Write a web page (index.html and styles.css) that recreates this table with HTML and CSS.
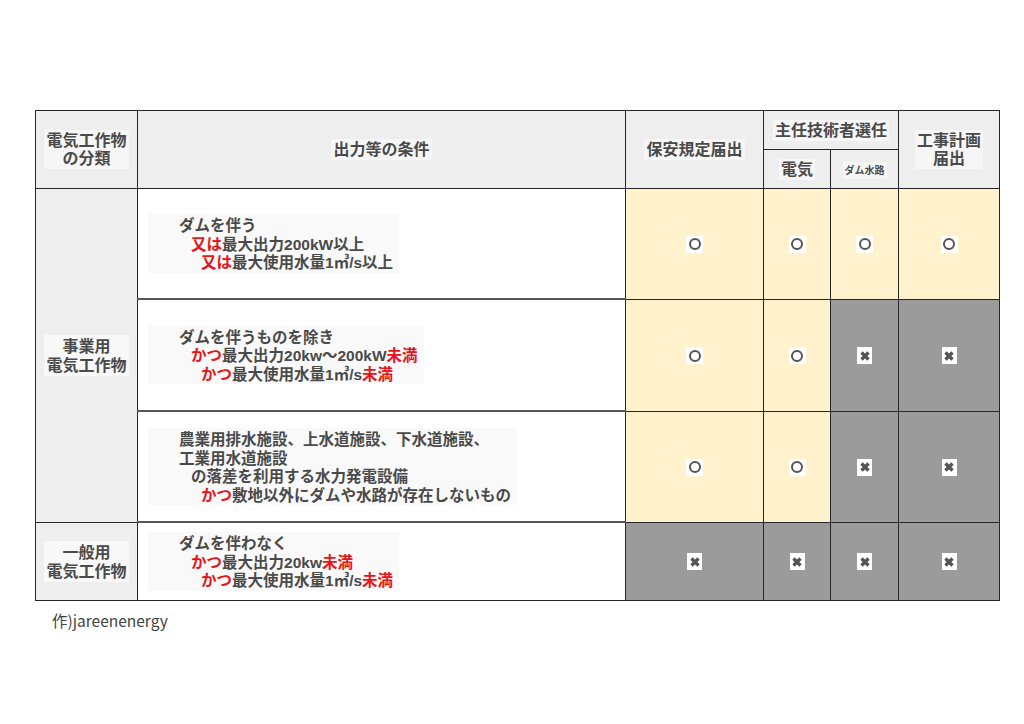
FILE: index.html
```html
<!DOCTYPE html>
<html lang="ja">
<head>
<meta charset="utf-8">
<link rel="stylesheet" href="styles.css">
</head>
<body>
<div class="page">
  <table class="grid">
    <colgroup>
      <col class="c-kind"><col class="c-cond"><col class="c-hoan"><col class="c-elec"><col class="c-dam"><col class="c-plan">
    </colgroup>
    <thead>
      <tr class="hr1">
        <th rowspan="2"><span class="lbl">電気工作物<br>の分類</span></th>
        <th rowspan="2"><span class="lbl">出力等の条件</span></th>
        <th rowspan="2"><span class="lbl">保安規定届出</span></th>
        <th colspan="2"><span class="lbl">主任技術者選任</span></th>
        <th rowspan="2"><span class="lbl">工事計画<br>届出</span></th>
      </tr>
      <tr class="hr2">
        <th><span class="lbl">電気</span></th>
        <th><span class="lbl small">ダム水路</span></th>
      </tr>
    </thead>
    <tbody>
      <tr class="r1">
        <th rowspan="3" class="kind"><span class="lbl">事業用<br>電気工作物</span></th>
        <td class="cond"><div class="cbox">
          <div>ダムを伴う</div>
          <div class="i1"><b class="red">又は</b>最大出力200kW以上</div>
          <div class="i2"><b class="red">又は</b>最大使用水量1㎥/s以上</div>
        </div></td>
        <td class="yes"><span class="mark"><span class="ring"></span></span></td>
        <td class="yes"><span class="mark"><span class="ring"></span></span></td>
        <td class="yes"><span class="mark"><span class="ring"></span></span></td>
        <td class="yes"><span class="mark"><span class="ring"></span></span></td>
      </tr>
      <tr class="r2">
        <td class="cond"><div class="cbox">
          <div>ダムを伴うものを除き</div>
          <div class="i1"><b class="red">かつ</b>最大出力20kw～200kW<b class="red">未満</b></div>
          <div class="i2"><b class="red">かつ</b>最大使用水量1㎥/s<b class="red">未満</b></div>
        </div></td>
        <td class="yes"><span class="mark"><span class="ring"></span></span></td>
        <td class="yes"><span class="mark"><span class="ring"></span></span></td>
        <td class="no"><span class="mark x"><svg width="10" height="10" viewBox="0 0 10 10"><path d="M1.5 1.5 L8.5 8.5 M8.5 1.5 L1.5 8.5" stroke="#555" stroke-width="3.4"/></svg></span></td>
        <td class="no"><span class="mark x"><svg width="10" height="10" viewBox="0 0 10 10"><path d="M1.5 1.5 L8.5 8.5 M8.5 1.5 L1.5 8.5" stroke="#555" stroke-width="3.4"/></svg></span></td>
      </tr>
      <tr class="r3">
        <td class="cond"><div class="cbox">
          <div>農業用排水施設、上水道施設、下水道施設、</div>
          <div>工業用水道施設</div>
          <div class="i1">の落差を利用する水力発電設備</div>
          <div class="i2"><b class="red">かつ</b>敷地以外にダムや水路が存在しないもの</div>
        </div></td>
        <td class="yes"><span class="mark"><span class="ring"></span></span></td>
        <td class="yes"><span class="mark"><span class="ring"></span></span></td>
        <td class="no"><span class="mark x"><svg width="10" height="10" viewBox="0 0 10 10"><path d="M1.5 1.5 L8.5 8.5 M8.5 1.5 L1.5 8.5" stroke="#555" stroke-width="3.4"/></svg></span></td>
        <td class="no"><span class="mark x"><svg width="10" height="10" viewBox="0 0 10 10"><path d="M1.5 1.5 L8.5 8.5 M8.5 1.5 L1.5 8.5" stroke="#555" stroke-width="3.4"/></svg></span></td>
      </tr>
      <tr class="r4">
        <th class="kind"><span class="lbl">一般用<br>電気工作物</span></th>
        <td class="cond"><div class="cbox">
          <div>ダムを伴わなく</div>
          <div class="i1"><b class="red">かつ</b>最大出力20kw<b class="red">未満</b></div>
          <div class="i2"><b class="red">かつ</b>最大使用水量1㎥/s<b class="red">未満</b></div>
        </div></td>
        <td class="no"><span class="mark x"><svg width="10" height="10" viewBox="0 0 10 10"><path d="M1.5 1.5 L8.5 8.5 M8.5 1.5 L1.5 8.5" stroke="#555" stroke-width="3.4"/></svg></span></td>
        <td class="no"><span class="mark x"><svg width="10" height="10" viewBox="0 0 10 10"><path d="M1.5 1.5 L8.5 8.5 M8.5 1.5 L1.5 8.5" stroke="#555" stroke-width="3.4"/></svg></span></td>
        <td class="no"><span class="mark x"><svg width="10" height="10" viewBox="0 0 10 10"><path d="M1.5 1.5 L8.5 8.5 M8.5 1.5 L1.5 8.5" stroke="#555" stroke-width="3.4"/></svg></span></td>
        <td class="no"><span class="mark x"><svg width="10" height="10" viewBox="0 0 10 10"><path d="M1.5 1.5 L8.5 8.5 M8.5 1.5 L1.5 8.5" stroke="#555" stroke-width="3.4"/></svg></span></td>
      </tr>
    </tbody>
  </table>
  <p class="credit">作)jareenenergy</p>
</div>
</body>
</html>
```
FILE: styles.css
```css
html, body {
  margin: 0;
  padding: 0;
  background: #ffffff;
}
body {
  font-family: "Noto Sans CJK JP", "Noto Sans", sans-serif;
  color: #4a4a4a;
}
.page {
  padding: 110px 0 0 35px;
}
.grid {
  border-collapse: collapse;
  table-layout: fixed;
  width: 964px;
  font-family: "Liberation Sans", "Noto Sans CJK JP", sans-serif;
}
.c-kind { width: 102px; }
.c-cond { width: 488px; }
.c-hoan { width: 138px; }
.c-elec { width: 67px; }
.c-dam { width: 68px; }
.c-plan { width: 101px; }

.grid th, .grid td {
  border: 1px solid #262626;
  padding: 0;
  text-align: center;
  vertical-align: middle;
}
.grid thead th {
  background: #eeeeee;
  font-size: 16px;
  font-weight: 700;
  line-height: 18px;
}
.hr1 th { height: 38px; }
.hr2 th { height: 38px; }
.lbl {
  display: inline-block;
  background: #f6f6f6;
  padding: 2px 2px 1px;
}
.lbl.small {
  font-size: 10px;
  line-height: 14px;
}
.grid th.kind {
  background: #eeeeee;
  font-size: 16px;
  font-weight: 700;
  line-height: 19px;
}
.kind .lbl { background: #f8f8f8; }
.r1 td { height: 109px; }
.r2 td { height: 110px; }
.r3 td { height: 109px; }
.r4 td { height: 77px; }

.grid td.cond {
  text-align: left;
  padding-left: 10px;
  font-size: 15.5px;
  font-weight: 700;
  line-height: 18.5px;
  background: #ffffff;
}
.grid tbody tr + tr td.cond {
  border-top: 2px solid #555555;
}
.cbox {
  display: inline-block;
  background: #f9f9f9;
  padding: 3px 6px 0 31px;
}
.i1 { padding-left: 12px; }
.i2 { padding-left: 22px; }
.red {
  color: #e8141a;
  font-weight: 700;
}
.yes { background: #fff2cc; }
.no { background: #9b9b9b; }

.mark {
  display: inline-flex;
  align-items: center;
  justify-content: center;
  width: 17px;
  height: 17px;
  background: #ffffff;
  vertical-align: middle;
}
.ring {
  width: 8px;
  height: 8px;
  border: 2px solid #555555;
  border-radius: 50%;
}
.mark.x {
  width: 15px;
  height: 17px;
}
.mark.x svg { display: block; }

.credit {
  margin: 8px 0 0 17px;
  font-size: 15.5px;
  color: #444444;
  font-weight: 400;
}
```
